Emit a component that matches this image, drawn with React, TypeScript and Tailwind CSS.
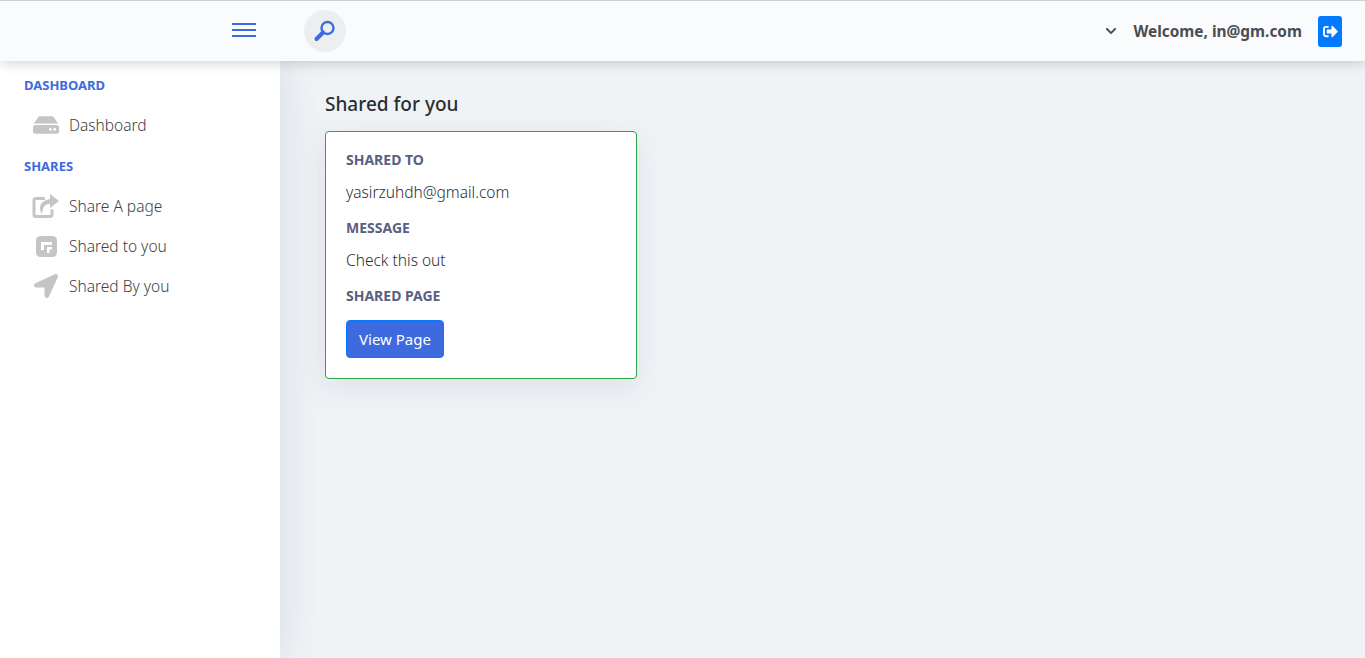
import React from 'react';
import { FaHdd, FaLocationArrow, FaSignOutAlt, FaChevronDown } from 'react-icons/fa';

const font = "font-['Noto_Sans','Open_Sans',sans-serif]";

const ShareIcon = () => (
  <svg viewBox="0 0 28 24" className="h-[24px] w-[28px]" fill="none">
    <path d="M13 4.500H4a2 2 0 0 0-2 2V21a1.500 1.500 0 0 0 1.500 1.500H18a2 2 0 0 0 2-2v-5" stroke="#c4c5c7" strokeWidth="3" />
    <path d="M18 0l9 7-9 7v-4c-4 0-7 1.500-8 10-1.500-2-2-4-2-6 0-5 4-8 10-9z" fill="#c4c5c7" />
  </svg>
);

const SharedToIcon = () => (
  <svg viewBox="0 0 21 21" className="h-[21px] w-[21px]" fill="none">
    <rect width="21" height="21" rx="4.500" fill="#c4c5c7" />
    <path d="M5 6h11v3H8v5H5z" fill="#fff" />
    <path d="M11 11h5v2.500h-2.500V17H11z" fill="#fff" />
  </svg>
);

const SearchIcon = () => (
  <svg viewBox="0 0 24 24" className="h-[24px] w-[24px]" fill="none">
    <circle cx="14.500" cy="9" r="6" stroke="#3d6ade" strokeWidth="2.400" />
    <path d="M10 13.500 3.500 20" stroke="#3d6ade" strokeWidth="4" strokeLinecap="round" />
  </svg>
);

const NavItem = ({ icon, label }: { icon: React.ReactNode; label: string }) => (
  <div className="flex h-10 items-center pl-[32px]">
    <span className="flex w-[37px] items-center text-[#c4c5c7]">{icon}</span>
    <span className="pt-[2px] text-[15.500px] font-light text-[#3c3f44]">{label}</span>
  </div>
);

const CardLabel = ({ children }: { children: React.ReactNode }) => (
  <div className="text-[14px] leading-[20px] font-bold text-[#5a607f] uppercase">{children}</div>
);

export default function App() {
  return (
    <div className={`${font} flex h-[658px] w-[1365px] flex-col overflow-hidden bg-[#f0f3f6]`}>
      <header className="relative z-20 flex h-[61px] shrink-0 items-center border-t border-[#d0d1d3] bg-[#fafbfd] pr-[23px] shadow-[0_2px_12px_rgba(0,0,0,0.18)]">
        <div className="flex w-[232px] shrink-0" />
        <div className="mb-[2px] flex w-[24px] flex-col gap-[4px]">
          <span className="h-[2px] bg-[#3d6ade]" />
          <span className="h-[2px] bg-[#3d6ade]" />
          <span className="h-[2px] bg-[#3d6ade]" />
        </div>
        <div className="ml-[48px] flex h-[42px] w-[42px] items-center justify-center rounded-full bg-[#eceef0]">
          <SearchIcon />
        </div>
        <div className="ml-auto flex items-center">
          <FaChevronDown className="mr-[16px] text-[12px] text-[#4a4d52]" />
          <span className="pt-[2px] text-[15.400px] font-bold text-[#4a4d52]">Welcome, in@gm.com</span>
          <div className="ml-[16px] flex h-[31px] w-[24px] items-center justify-center rounded-[3px] bg-[#007bff]">
            <FaSignOutAlt className="text-[15px] text-white" />
          </div>
        </div>
      </header>
      <div className="flex min-h-0 flex-1">
        <aside className="relative z-10 w-[280px] shrink-0 bg-white pt-[14px] shadow-[0_0_40px_rgba(120,130,150,0.22)]">
          <div className="pl-[24px] text-[13px] leading-[20px] font-bold text-[#3d6ade]">DASHBOARD</div>
          <div className="mt-[10px]">
            <NavItem icon={<FaHdd className="ml-[1px] text-[26px]" />} label="Dashboard" />
          </div>
          <div className="mt-[11px] pl-[24px] text-[13px] leading-[20px] font-bold text-[#3d6ade]">SHARES</div>
          <div className="mt-[10px]">
            <NavItem icon={<ShareIcon />} label="Share A page" />
            <NavItem icon={<span className="pl-[4px]"><SharedToIcon /></span>} label="Shared to you" />
            <NavItem icon={<FaLocationArrow className="ml-[2px] text-[24px]" />} label="Shared By you" />
          </div>
        </aside>
        <main className="flex-1 pt-[30px] pl-[45px]">
          <h1 className="text-[19px] leading-[26px] font-medium text-[#2a2d31]">Shared for you</h1>
          <div className="mt-[14px] h-[248px] w-[312px] rounded-[4px] border border-[#28a745] bg-white px-[20px] pt-[18px] shadow-[0_8px_30px_rgba(120,130,150,0.16)]">
            <CardLabel>Shared to</CardLabel>
            <div className="mt-[12px] text-[15.500px] leading-[20px] font-light text-[#2c2f34]">yasirzuhdh@gmail.com</div>
            <div className="mt-[16px]"><CardLabel>Message</CardLabel></div>
            <div className="mt-[12px] text-[15.500px] leading-[20px] font-light text-[#2c2f34]">Check this out</div>
            <div className="mt-[16px]"><CardLabel>Shared page</CardLabel></div>
            <button className="mt-[14px] h-[38px] w-[98px] rounded-[4px] border border-[#007bff] bg-[#3d6ade] text-[15px] text-white">View Page</button>
          </div>
        </main>
      </div>
    </div>
  );
}
